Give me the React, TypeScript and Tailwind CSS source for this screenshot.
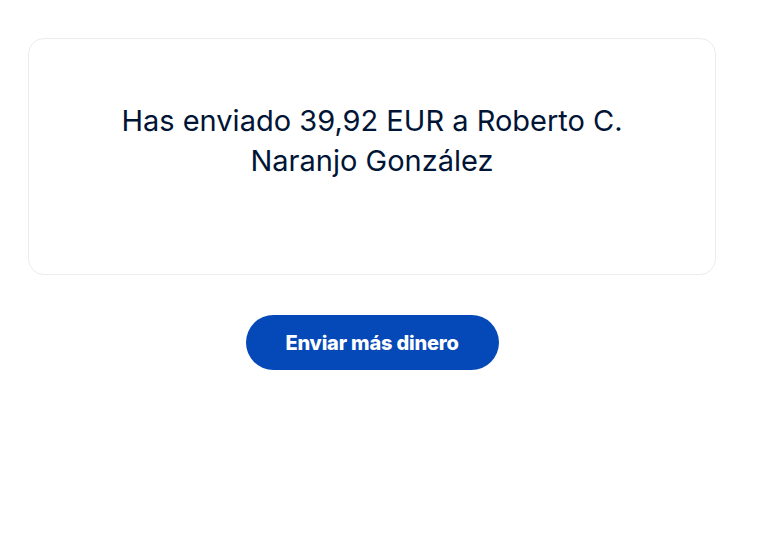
export default function App() {
  return (
    <div className="min-h-[534px] w-[763px] bg-white pt-[38px] font-['Inter',sans-serif]">
      <div className="ml-[28px] flex h-[237px] w-[688px] items-start justify-center rounded-[16px] border border-[#ececec] px-[60px] pt-[62px]">
        <p className="text-center text-[29px] leading-[40px] text-[#001435]">
          Has enviado 39,92 EUR a Roberto C. Naranjo González
        </p>
      </div>
      <div className="ml-[28px] mt-[40px] flex w-[688px] justify-center">
        <button className="h-[55px] w-[253px] rounded-full bg-[#0548b8] text-[20px] font-extrabold tracking-[-0.2px] text-white">
          Enviar más dinero
        </button>
      </div>
    </div>
  );
}
